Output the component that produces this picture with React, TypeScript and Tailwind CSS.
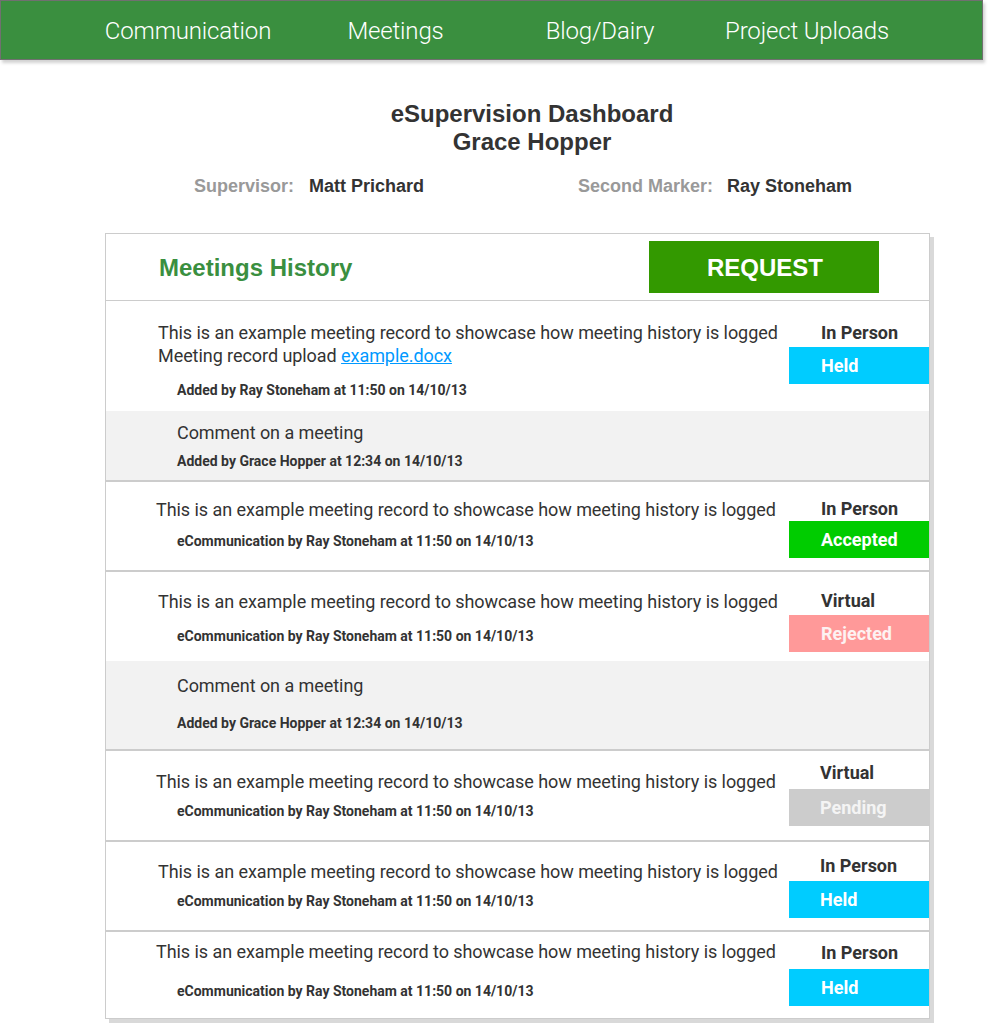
import React from "react";

type Status = "Held" | "Accepted" | "Rejected" | "Pending";

const badgeClass: Record<Status, string> = {
  Held: "bg-[#00ccff] text-white",
  Accepted: "bg-[#00cc00] text-white",
  Rejected: "bg-[#ff9999] text-[#fdf2f2]",
  Pending: "bg-[#cccccc] text-[#f4f4f4]",
};

interface RowProps {
  h: string;
  pl: string;
  pt: string;
  metaMt: string;
  labelPt: string;
  badgeMt: string;
  labelPl: string;
  label: string;
  status: Status;
  meta: string;
  upload?: boolean;
}

function Row(p: RowProps) {
  return (
    <div className={`flex ${p.h}`}>
      <div className={`flex-1 ${p.pt}`}>
        <div className={`${p.pl} text-[18px] leading-[23px] tracking-[-0.06px] text-[#333] font-[Roboto,sans-serif]`}>
          This is an example meeting record to showcase how meeting history is logged
        </div>
        {p.upload && (
          <div className={`${p.pl} text-[18px] leading-[23px] tracking-[-0.06px] text-[#333] font-[Roboto,sans-serif]`}>
            Meeting record upload{" "}
            <a href="#" className="text-[#0099ff] underline">
              example.docx
            </a>
          </div>
        )}
        <div className={`${p.metaMt} pl-[71px] text-[14px] leading-[17px] font-bold text-[#333] font-[Roboto,sans-serif]`}>
          {p.meta}
        </div>
      </div>
      <div className={`w-[140px] ${p.labelPt}`}>
        <div className={`${p.labelPl} text-[18px] leading-[20px] font-bold text-[#333] font-[Roboto,sans-serif]`}>
          {p.label}
        </div>
        <div
          className={`${p.badgeMt} h-[37px] flex items-center ${p.labelPl} text-[18px] font-bold font-[Roboto,sans-serif] ${badgeClass[p.status]}`}
        >
          {p.status}
        </div>
      </div>
    </div>
  );
}

function Comment({ h, pt, metaMt }: { h: string; pt: string; metaMt: string }) {
  return (
    <div className={`bg-[#f2f2f2] ${h} ${pt} pl-[71px] font-[Roboto,sans-serif]`}>
      <div className="text-[18px] leading-[23px] tracking-[-0.06px] text-[#333]">Comment on a meeting</div>
      <div className={`${metaMt} text-[14px] leading-[17px] font-bold text-[#333]`}>
        Added by Grace Hopper at 12:34 on 14/10/13
      </div>
    </div>
  );
}

const eMeta = "eCommunication by Ray Stoneham at 11:50 on 14/10/13";

export default function App() {
  return (
    <div className="min-h-[1024px] bg-white font-[Roboto,sans-serif]">
      <nav className="w-[983px] h-[60px] bg-[#3a8f3f] border border-[#707070] shadow-[2px_3px_3px_rgba(0,0,0,0.18)] flex items-center pl-[84px]">
        {[
          ["Communication", "pl-[0px]"],
          ["Meetings", "pl-[3px]"],
          ["Blog/Dairy", "pl-[0px]"],
          ["Project Uploads", "pl-[2px]"],
        ].map(([t, c]) => (
          <div key={t} className={`w-[206px] ${c} text-center text-white text-[24px] tracking-[-0.15px] font-light font-[Roboto,sans-serif] mt-[1px]`}>
            {t}
          </div>
        ))}
      </nav>

      <div className="pt-[40px] pl-[76px] text-center font-['Liberation_Sans',Arial,sans-serif] font-bold text-[#333] text-[24px] leading-[28px]">
        <div>eSupervision Dashboard</div>
        <div>Grace Hopper</div>
      </div>

      <div className="mt-[19px] flex font-['Liberation_Sans',Arial,sans-serif] font-bold text-[18px] leading-[22px]">
        <div className="ml-[194px] w-[384px]">
          <span className="text-[#999]">Supervisor:</span>
          <span className="text-[#333] ml-[15px]">Matt Prichard</span>
        </div>
        <div>
          <span className="text-[#999]">Second Marker:</span>
          <span className="text-[#333] ml-[14px]">Ray Stoneham</span>
        </div>
      </div>

      <div className="mt-[36px] ml-[105px] w-[825px] border border-[#cccccc] shadow-[4px_4px_0_#d9d9d9]">
        <div className="h-[67px] flex items-center border-b border-[#cccccc]">
          <div className="pl-[53px] w-[543px] text-[24px] font-bold text-[#3a8f3f] font-['Liberation_Sans',Arial,sans-serif] mt-[1px]">
            Meetings History
          </div>
          <button className="w-[230px] h-[52px] bg-[#339900] text-white text-[24px] font-bold font-['Liberation_Sans',Arial,sans-serif] flex items-center justify-center pt-[2px] pl-[2px]">
            REQUEST
          </button>
        </div>

        <Row h="h-[110px]" pl="pl-[52px]" pt="pt-[20px]" metaMt="mt-[15px]" labelPt="pt-[22px]" badgeMt="mt-[4px]" labelPl="pl-[32px]" label="In Person" status="Held" meta="Added by Ray Stoneham at 11:50 on 14/10/13" upload />
        <Comment h="h-[69px]" pt="pt-[10px]" metaMt="mt-[9px]" />
        <div className="border-t-2 border-[#cccccc]" />
        <Row h="h-[88px]" pl="pl-[50px]" pt="pt-[16px]" metaMt="mt-[12px]" labelPt="pt-[17px]" badgeMt="mt-[2px]" labelPl="pl-[32px]" label="In Person" status="Accepted" meta={eMeta} />
        <div className="border-t-2 border-[#cccccc]" />
        <Row h="h-[89px]" pl="pl-[52px]" pt="pt-[18px]" metaMt="mt-[15px]" labelPt="pt-[19px]" badgeMt="mt-[4px]" labelPl="pl-[32px]" label="Virtual" status="Rejected" meta={eMeta} />
        <Comment h="h-[88px]" pt="pt-[13px]" metaMt="mt-[18px]" />
        <div className="border-t-2 border-[#cccccc]" />
        <Row h="h-[89px]" pl="pl-[50px]" pt="pt-[19px]" metaMt="mt-[10px]" labelPt="pt-[12px]" badgeMt="mt-[6px]" labelPl="pl-[31px]" label="Virtual" status="Pending" meta={eMeta} />
        <div className="border-t-2 border-[#cccccc]" />
        <Row h="h-[88px]" pl="pl-[52px]" pt="pt-[18px]" metaMt="mt-[10px]" labelPt="pt-[14px]" badgeMt="mt-[5px]" labelPl="pl-[31px]" label="In Person" status="Held" meta={eMeta} />
        <div className="border-t-2 border-[#cccccc]" />
        <Row h="h-[86px]" pl="pl-[50px]" pt="pt-[8px]" metaMt="mt-[20px]" labelPt="pt-[11px]" badgeMt="mt-[6px]" labelPl="pl-[32px]" label="In Person" status="Held" meta={eMeta} />
      </div>
    </div>
  );
}
